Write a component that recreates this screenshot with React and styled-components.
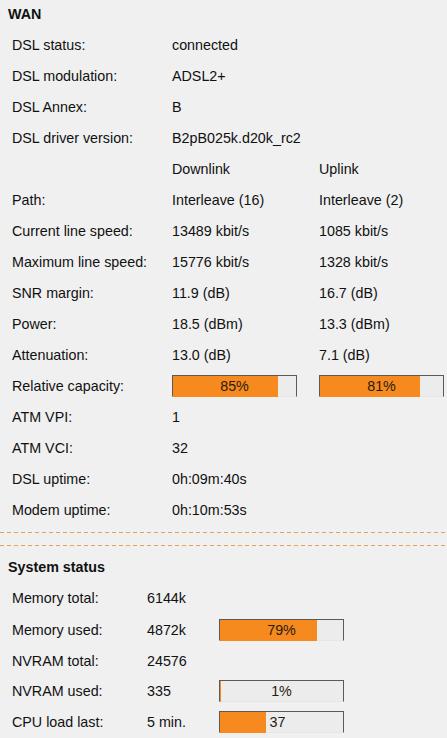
import React from "react";
import styled, { createGlobalStyle } from "styled-components";

const Global = createGlobalStyle`
  html, body {
    margin: 0;
    padding: 0;
    background: #f0f0f0;
  }
  body {
    font-family: "Liberation Sans", Arial, sans-serif;
    font-size: 14.3px;
    color: #111;
  }
`;

const Page = styled.div`
  width: 447px;
  height: 738px;
  overflow: hidden;
  background: #f0f0f0;
`;

const Heading = styled.div`
  font-weight: bold;
  line-height: 18px;
  padding: ${(p) => p.$top}px 8px ${(p) => p.$bottom}px;
`;

const Grid = styled.div`
  display: grid;
  grid-template-columns: ${(p) => p.$cols};
  padding-left: 12px;
`;

const Cell = styled.div`
  height: ${(p) => p.$h || 31}px;
  display: flex;
  align-items: center;
  white-space: nowrap;
  line-height: 18px;
`;

const Divider = styled.div`
  height: 1px;
  margin-top: ${(p) => p.$mt}px;
  background: repeating-linear-gradient(
    to right,
    #e2a35c 0px,
    #e2a35c 4px,
    transparent 4px,
    transparent 7px
  );
`;

const BarBox = styled.div`
  width: ${(p) => p.$w}px;
  height: 22px;
  box-sizing: border-box;
  border: 1px solid #5a5a5a;
  border-bottom: 1px solid #e6e6e6;
  background: #ececec;
  display: grid;
  grid-template-columns: 100%;
  grid-template-rows: 100%;
`;

const Fill = styled.div`
  grid-area: 1 / 1;
  justify-self: start;
  height: calc(100% + 1px);
  background: #f68a1f;
`;

const BarText = styled.div`
  grid-area: 1 / 1;
  justify-self: ${(p) => (p.$after ? "start" : "center")};
  align-self: center;
  line-height: 18px;
  color: #2a1a10;
  padding-left: ${(p) => (p.$after ? "4px" : "0")};
`;

function Bar({ pct, label, after, w = 125 }) {
  return (
    <BarBox $w={w}>
      <Fill style={{ width: `${pct}%` }} />
      <BarText $after={after} style={after ? { marginLeft: `${pct}%` } : undefined}>
        {label}
      </BarText>
    </BarBox>
  );
}

const wanRows = [
  ["DSL status:", "connected", ""],
  ["DSL modulation:", "ADSL2+", ""],
  ["DSL Annex:", "B", ""],
  ["DSL driver version:", "B2pB025k.d20k_rc2", ""],
  ["", "Downlink", "Uplink"],
  ["Path:", "Interleave (16)", "Interleave (2)"],
  ["Current line speed:", "13489 kbit/s", "1085 kbit/s"],
  ["Maximum line speed:", "15776 kbit/s", "1328 kbit/s"],
  ["SNR margin:", "11.9 (dB)", "16.7 (dB)"],
  ["Power:", "18.5 (dBm)", "13.3 (dBm)"],
  ["Attenuation:", "13.0 (dB)", "7.1 (dB)"],
  ["Relative capacity:", { pct: 85, label: "85%" }, { pct: 81, label: "81%" }],
  ["ATM VPI:", "1", ""],
  ["ATM VCI:", "32", ""],
  ["DSL uptime:", "0h:09m:40s", ""],
  ["Modem uptime:", "0h:10m:53s", ""],
];

const sysRows = [
  { label: "Memory total:", value: "6144k", h: 31 },
  { label: "Memory used:", value: "4872k", h: 33, bar: { pct: 79, label: "79%" } },
  { label: "NVRAM total:", value: "24576", h: 29 },
  { label: "NVRAM used:", value: "335", h: 31, bar: { pct: 1, label: "1%" } },
  { label: "CPU load last:", value: "5 min.", h: 31, bar: { pct: 37, label: "37", after: true } },
];

const renderVal = (v) =>
  typeof v === "object" ? <Bar pct={v.pct} label={v.label} /> : v;

export default function App() {
  return (
    <Page>
      <Global />
      <Heading $top={5} $bottom={6}>WAN</Heading>
      <Grid $cols="160px 147px 1fr">
        {wanRows.map((r, i) => (
          <React.Fragment key={i}>
            <Cell>{r[0]}</Cell>
            <Cell>{renderVal(r[1])}</Cell>
            <Cell>{renderVal(r[2])}</Cell>
          </React.Fragment>
        ))}
      </Grid>
      <Divider $mt={7} />
      <Divider $mt={12} />
      <Heading $top={12} $bottom={6}>System status</Heading>
      <Grid $cols="135px 72px 1fr">
        {sysRows.map((r, i) => (
          <React.Fragment key={i}>
            <Cell $h={r.h}>{r.label}</Cell>
            <Cell $h={r.h}>{r.value}</Cell>
            <Cell $h={r.h}>
              {r.bar && <Bar w={125} pct={r.bar.pct} label={r.bar.label} after={r.bar.after} />}
            </Cell>
          </React.Fragment>
        ))}
      </Grid>
    </Page>
  );
}
